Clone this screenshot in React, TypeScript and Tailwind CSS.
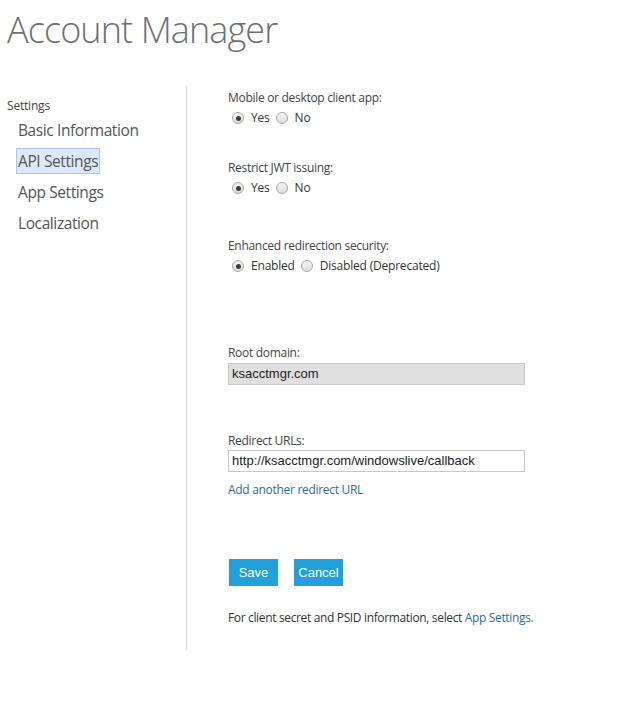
import React from 'react';

const Radio = ({ checked }: { checked?: boolean }) => (
  <span className="inline-flex h-[12px] w-[12px] items-center justify-center rounded-full border border-[#a9a9a9] bg-gradient-to-b from-[#f4f4f4] to-[#dedede]">
    {checked && <span className="h-[5px] w-[5px] rounded-full bg-[#3c3c3c]" />}
  </span>
);

const RadioGroup = ({ options }: { options: string[] }) => (
  <div className="mt-[3px] flex h-[18px] items-center pl-[4px] text-[12px] tracking-[-0.2px] text-[#333]">
    {options.map((o, i) => (
      <label key={o} className="mr-[6px] flex items-center gap-[7px]">
        <Radio checked={i === 0} />
        <span>{o}</span>
      </label>
    ))}
  </div>
);

const Label = ({ children }: { children: React.ReactNode }) => (
  <div className="h-[16px] text-[12px] leading-[16px] tracking-[-0.3px] text-[#444]">{children}</div>
);

export default function App() {
  const nav = ['Basic Information', 'API Settings', 'App Settings', 'Localization'];

  return (
    <div className="h-[704px] w-[642px] bg-white font-['Open_Sans',sans-serif]">
      <h1 className="pl-[7px] pt-[8px] text-[36px] font-light leading-[44px] tracking-[-0.9px] text-[#6f6f6f]">
        Account Manager
      </h1>

      <div className="mt-[34px] flex">
        <aside className="h-[564px] w-[187px] border-r border-[#d4d4d4] pt-[12px]">
          <div className="pl-[7px] text-[12px] leading-[16px] tracking-[-0.2px] text-[#444]">Settings</div>
          <ul className="mt-[1px]">
            {nav.map((n) => (
              <li key={n} className="h-[31px] pl-[16px] text-[15.5px] leading-[31px] tracking-[-0.4px] text-[#555]">
                <span
                  className={
                    n === 'API Settings'
                      ? 'border border-[#a8c8ee] bg-[#dde9f8] px-[1px] py-[1px]'
                      : 'px-[2px]'
                  }
                >
                  {n}
                </span>
              </li>
            ))}
          </ul>
        </aside>

        <main className="pl-[41px] pt-[4px]">
          <Label>Mobile or desktop client app:</Label>
          <RadioGroup options={['Yes', 'No']} />

          <div className="mt-[33px]">
            <Label>Restrict JWT issuing:</Label>
            <RadioGroup options={['Yes', 'No']} />
          </div>

          <div className="mt-[41px]">
            <Label>Enhanced redirection security:</Label>
            <RadioGroup options={['Enabled', 'Disabled (Deprecated)']} />
          </div>

          <div className="mt-[70px]">
            <Label>Root domain:</Label>
            <div className="mt-[2px] flex h-[22px] w-[297px] items-center border border-[#c8c8c8] bg-[#e0e0e0] pl-[3px] font-['Liberation_Sans',sans-serif] text-[13px] text-[#222]">
              ksacctmgr.com
            </div>
          </div>

          <div className="mt-[48px]">
            <Label>Redirect URLs:</Label>
            <div className="mt-[1px] flex h-[22px] w-[297px] items-center border border-[#c8c8c8] bg-white pl-[3px] font-['Liberation_Sans',sans-serif] text-[13px] text-[#222]">
              http://ksacctmgr.com/windowslive/callback
            </div>
            <a className="mt-[10px] block text-[12px] leading-[16px] tracking-[-0.3px] text-[#2b6e9c]">
              Add another redirect URL
            </a>
          </div>

          <div className="ml-[1px] mt-[61px] flex gap-[16px]">
            <button className="h-[27px] w-[49px] bg-[#22a0da] font-['Liberation_Sans',sans-serif] text-[13px] text-white">
              Save
            </button>
            <button className="h-[27px] w-[49px] bg-[#22a0da] font-['Liberation_Sans',sans-serif] text-[13px] text-white">
              Cancel
            </button>
          </div>

          <p className="mt-[24px] text-[12px] leading-[16px] tracking-[-0.35px] text-[#333]">
            For client secret and PSID information, select{' '}
            <a className="text-[#2b6e9c]">App Settings.</a>
          </p>
        </main>
      </div>
    </div>
  );
}
